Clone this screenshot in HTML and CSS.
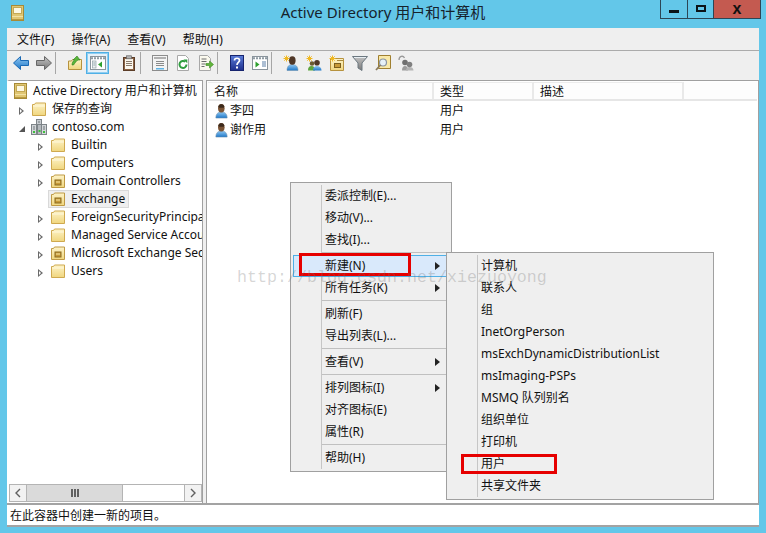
FILE: index.html
```html
<!DOCTYPE html>
<html lang="zh">
<head>
<meta charset="utf-8">
<title>Active Directory 用户和计算机</title>
<link rel="stylesheet" href="styles.css">
</head>
<body>
<svg class="defs" width="0" height="0" aria-hidden="true">
  <defs>
    <linearGradient id="gf" x1="0" y1="0" x2="0" y2="1"><stop offset="0" stop-color="#fdf3c8"/><stop offset="1" stop-color="#f0d67e"/></linearGradient>
    <linearGradient id="gb" x1="0" y1="0" x2="0" y2="1"><stop offset="0" stop-color="#8fc7f2"/><stop offset="1" stop-color="#1f78c8"/></linearGradient>
    <linearGradient id="gg" x1="0" y1="0" x2="0" y2="1"><stop offset="0" stop-color="#c4c4c4"/><stop offset="1" stop-color="#777"/></linearGradient>
    <linearGradient id="gh" x1="0" y1="0" x2="0" y2="1"><stop offset="0" stop-color="#5a7cd8"/><stop offset="1" stop-color="#1e2f8c"/></linearGradient>
    <symbol id="folder" viewBox="0 0 16 16">
      <path d="M1.500 14.500V3.500h2l1-1.500h10v12.500z" fill="url(#gf)" stroke="#cfa94f"/>
      <path d="M2 5h12" stroke="#fff8dc"/>
    </symbol>
    <symbol id="ou" viewBox="0 0 16 16">
      <path d="M1.500 14.500V3.500h2l1-1.500h10v12.500z" fill="url(#gf)" stroke="#bf9a45"/>
      <rect x="5" y="7" width="6" height="5" fill="#c79a38" stroke="#8a6a20"/>
      <path d="M6 9h4" stroke="#f7e7a8"/>
    </symbol>
    <symbol id="root" viewBox="0 0 13 16">
      <rect x=".5" y=".5" width="12" height="15" fill="#e0c672" stroke="#a78a36"/>
      <rect x="2.500" y="2.500" width="8" height="6" fill="#fdf8e2" stroke="#c4a955"/>
      <path d="M1 11.500h11" stroke="#f2e2a4"/>
      <path d="M1 14.500h11" stroke="#b99a40"/>
    </symbol>
    <symbol id="domain" viewBox="0 0 16 16">
      <rect x="5.500" y=".5" width="5" height="7" fill="#c8ccd0" stroke="#7d8488"/>
      <rect x=".5" y="5.500" width="5" height="10" fill="#d2d5d8" stroke="#7d8488"/>
      <rect x="6.500" y="5.500" width="4" height="10" fill="#b5babe" stroke="#7d8488"/>
      <rect x="10.500" y="5.500" width="5" height="10" fill="#d2d5d8" stroke="#7d8488"/>
      <path d="M2 8h2M2 10h2M12 8h2M12 10h2M7 3h2" stroke="#6f767a"/>
      <rect x="2" y="12" width="2" height="2" fill="#3cbf3c"/>
      <rect x="12" y="12" width="2" height="2" fill="#3cbf3c"/>
      <rect x="7.500" y="11" width="2" height="2" fill="#3cbf3c"/>
    </symbol>
    <symbol id="user" viewBox="0 0 16 16">
      <path d="M2 15.500c0-4 1.800-6.500 6-6.500s6 2.500 6 6.500z" fill="url(#gb)" stroke="#6b8eab" stroke-width=".6"/>
      <ellipse cx="7.800" cy="5" rx="3.500" ry="4.600" fill="#7a5436"/>
      <path d="M4.800 3c1-2.800 5-2.800 6 0l-.3 1.500H5.100z" fill="#3c2a1c"/>
    </symbol>
    <symbol id="back" viewBox="0 0 16 16">
      <path d="M.5 8l7-6.500v4h8v5h-8v4z" fill="url(#gb)" stroke="#1a69b4"/>
    </symbol>
    <symbol id="fwd" viewBox="0 0 16 16">
      <path d="M15.500 8l-7-6.500v4h-8v5h8v4z" fill="url(#gg)" stroke="#666"/>
    </symbol>
    <symbol id="upfolder" viewBox="0 0 16 16">
      <path d="M1.500 14.500V6h3l1-1.500h9v10z" fill="url(#gf)" stroke="#b6923e"/>
      <path d="M5 10c0-2 .8-4 2.500-5H6L10 1l3 4h-2C9.500 5.500 8 8 6.500 10z" fill="#5ab53a" stroke="#2f7d1e" stroke-width=".6"/>
    </symbol>
    <symbol id="tree" viewBox="0 0 16 16">
      <rect x=".5" y="1.500" width="15" height="13" fill="#fff" stroke="#8a949c"/>
      <path d="M1 3.200h14" stroke="#8f9aa2" stroke-width="2" stroke-dasharray="2 1"/>
      <rect x="2.500" y="6" width="3.500" height="7" fill="#eef2f0" stroke="#8fa0a8" stroke-width=".7"/>
      <path d="M3.300 8h2M3.300 10h2" stroke="#6a8a9a" stroke-width=".7"/>
      <path d="M12 6.500v6l-4-3z" fill="#2fa02f"/>
    </symbol>
    <symbol id="treer" viewBox="0 0 16 16">
      <rect x=".5" y="1.500" width="15" height="13" fill="#fff" stroke="#8a949c"/>
      <path d="M1 3.200h14" stroke="#8f9aa2" stroke-width="2" stroke-dasharray="2 1"/>
      <path d="M3.500 6.500v6l4-3z" fill="#2fa02f"/>
      <path d="M10 7h4M10 9h4M10 11h4" stroke="#5a7fa8" stroke-width="1.200"/>
    </symbol>
    <symbol id="clip" viewBox="0 0 16 16">
      <rect x="2.500" y="2.500" width="11" height="13" fill="#8a6244" stroke="#5c3d28"/>
      <rect x="4" y="4" width="8" height="10" fill="#fbf7ee"/>
      <rect x="5.500" y=".8" width="5" height="3" fill="#b5b5b5" stroke="#666" stroke-width=".7"/>
      <path d="M5 6.500h6M5 8.500h6M5 10.500h6" stroke="#8a7a6a"/>
    </symbol>
    <symbol id="props" viewBox="0 0 16 16">
      <rect x=".5" y=".5" width="15" height="15" fill="#f4f4f4" stroke="#8c8c8c"/>
      <rect x="2" y="2" width="12" height="2" fill="#b0b0b0"/>
      <path d="M4 6.500h8M4 8.500h8M4 10.500h8" stroke="#8b8b8b"/>
      <rect x="4" y="13" width="8" height="1.500" fill="#5fb4e6"/>
    </symbol>
    <symbol id="refresh" viewBox="0 0 16 16">
      <path d="M2.500.5h8l3 3v12h-11z" fill="#fff" stroke="#a8a8a8"/>
      <path d="M11.500 9.500a3.500 3.500 0 1 1-1.200-2.700" fill="none" stroke="#2f9e3f" stroke-width="2"/>
      <path d="M8.500 4.500h3.800v3.800z" fill="#2f9e3f"/>
    </symbol>
    <symbol id="export" viewBox="0 0 16 16">
      <path d="M1.500.5h8l3 3v12h-11z" fill="#fbf9ee" stroke="#a8a8a8"/>
      <path d="M3.500 4h5M3.500 6.500h5M3.500 9h4M3.500 11.500h3" stroke="#6d6d6d"/>
      <path d="M8 8.500h3.500V6l4 3.500-4 3.500v-2.500H8z" fill="#62b53c" stroke="#3c8a20" stroke-width=".6"/>
    </symbol>
    <symbol id="help" viewBox="0 0 16 16">
      <rect x="1.500" y=".5" width="13" height="15" fill="url(#gh)" stroke="#17246e"/>
      <path d="M5.500 5.500C5.500 2.500 10.500 2.500 10.500 5.500 10.500 7.500 8 7.500 8 10" fill="none" stroke="#fff" stroke-width="1.700"/>
      <rect x="7" y="11.500" width="2" height="2" fill="#fff"/>
    </symbol>
    <symbol id="newuser" viewBox="0 0 16 16">
      <path d="M4 15.500c0-4 1.800-6 5.300-6s5.700 2 5.700 6z" fill="url(#gb)" stroke="#6b8eab" stroke-width=".5"/>
      <ellipse cx="9.300" cy="5.500" rx="3.300" ry="4.200" fill="#4f3727"/>
      <path d="M3.500.5v6M.5 3.500h6M1.300 1.300l4.400 4.400M5.700 1.300L1.300 5.700" stroke="#f0b820"/>
    </symbol>
    <symbol id="newgroup" viewBox="0 0 16 16">
      <path d="M2 15.500c0-3 1-4.500 3.500-4.500s3.500 1.500 3.500 4.500z" fill="#5ea53e"/>
      <path d="M7 15.500c0-3 1.500-4.500 4-4.500s4.500 1.500 4.500 4.500z" fill="url(#gb)"/>
      <circle cx="6" cy="8.500" r="2.300" fill="#6a5a30"/>
      <circle cx="11" cy="7.800" r="2.800" fill="#4f3727"/>
      <path d="M3.500.5v6M.5 3.500h6M1.300 1.300l4.400 4.400M5.700 1.300L1.300 5.700" stroke="#f0b820"/>
    </symbol>
    <symbol id="newou" viewBox="0 0 16 16">
      <path d="M1.500 15.500V3.500h13v12z" fill="url(#gf)" stroke="#b6923e"/>
      <path d="M8 5.500h6" stroke="#a98a3c"/>
      <rect x="5.500" y="8.500" width="6" height="4" fill="#c79a38" stroke="#7b5e1c"/>
      <path d="M3.500.5v6M.5 3.500h6M1.300 1.300l4.400 4.400M5.700 1.300L1.300 5.700" stroke="#f0b820"/>
    </symbol>
    <symbol id="filter" viewBox="0 0 16 16">
      <path d="M.5 1.500h15L10 8v7.500L6 13V8z" fill="url(#gg)" stroke="#6c7880"/>
      <path d="M2 2.500h12" stroke="#e8eef2"/>
    </symbol>
    <symbol id="find" viewBox="0 0 16 16">
      <path d="M3.500.5h12v13h-12z" fill="#f9e9a8" stroke="#a08030"/>
      <circle cx="8" cy="7.500" r="3.500" fill="#e6f0f6" stroke="#8a94a0" stroke-width="1.200"/>
      <path d="M5.500 10L1 15" stroke="#8a7a5c" stroke-width="1.800"/>
    </symbol>
    <symbol id="delegate" viewBox="0 0 16 16">
      <path d="M1 5c0-4 4-5 5.500-2" fill="none" stroke="#999" stroke-width="1.300"/>
      <path d="M4 15.500c0-3 1-4.500 3-4.500s3 1.500 3 4.500z" fill="#9c9c9c"/>
      <path d="M8 15.500c0-2.500 1.500-3.500 3.500-3.500s4 1 4 3.500z" fill="#b4b4b4"/>
      <circle cx="7" cy="7.500" r="2.800" fill="#707070"/>
      <circle cx="11.500" cy="9.500" r="2.800" fill="#808080"/>
    </symbol>
  </defs>
</svg>

<div class="window">
  <header class="titlebar">
    <svg class="app-icon"><use href="#root"/></svg>
    <h1 class="title">Active Directory 用户和计算机</h1>
    <div class="controls">
      <div class="ctl ctl-min"><span class="min-glyph"></span></div>
      <div class="ctl ctl-max"><span class="max-glyph"></span></div>
      <div class="ctl ctl-close">x</div>
    </div>
  </header>

  <main class="client">
    <nav class="menubar">
      <span>文件(F)</span><span>操作(A)</span><span>查看(V)</span><span>帮助(H)</span>
    </nav>
    <div class="toolbar">
      <span class="tb"><svg class="ti"><use href="#back"/></svg></span>
      <span class="tb"><svg class="ti"><use href="#fwd"/></svg></span>
      <span class="sep"></span>
      <span class="tb"><svg class="ti"><use href="#upfolder"/></svg></span>
      <span class="tb active"><svg class="ti"><use href="#tree"/></svg></span>
      <span class="gap"></span>
      <span class="tb"><svg class="ti"><use href="#clip"/></svg></span>
      <span class="sep"></span>
      <span class="tb"><svg class="ti"><use href="#props"/></svg></span>
      <span class="tb"><svg class="ti"><use href="#refresh"/></svg></span>
      <span class="tb"><svg class="ti"><use href="#export"/></svg></span>
      <span class="sep"></span>
      <span class="tb"><svg class="ti"><use href="#help"/></svg></span>
      <span class="tb"><svg class="ti"><use href="#treer"/></svg></span>
      <span class="sep"></span>
      <span class="tb"><svg class="ti"><use href="#newuser"/></svg></span>
      <span class="tb"><svg class="ti"><use href="#newgroup"/></svg></span>
      <span class="tb"><svg class="ti"><use href="#newou"/></svg></span>
      <span class="tb"><svg class="ti"><use href="#filter"/></svg></span>
      <span class="tb"><svg class="ti"><use href="#find"/></svg></span>
      <span class="tb"><svg class="ti"><use href="#delegate"/></svg></span>
    </div>

    <div class="panes">
      <section class="left">
        <ul class="tree">
          <li class="row lv0"><span class="node"><svg class="ic-root"><use href="#root"/></svg><span class="lbl">Active Directory 用户和计算机</span></span></li>
          <li class="row lv1"><span class="tw open"></span><span class="node"><svg class="ic"><use href="#folder"/></svg><span class="lbl">保存的查询</span></span></li>
          <li class="row lv1"><span class="tw down"></span><span class="node"><svg class="ic"><use href="#domain"/></svg><span class="lbl">contoso.com</span></span></li>
          <li class="row lv2"><span class="tw open"></span><span class="node"><svg class="ic"><use href="#folder"/></svg><span class="lbl">Builtin</span></span></li>
          <li class="row lv2"><span class="tw open"></span><span class="node"><svg class="ic"><use href="#folder"/></svg><span class="lbl">Computers</span></span></li>
          <li class="row lv2"><span class="tw open"></span><span class="node"><svg class="ic"><use href="#ou"/></svg><span class="lbl">Domain Controllers</span></span></li>
          <li class="row lv2"><span class="tw"></span><span class="node selected"><svg class="ic"><use href="#ou"/></svg><span class="lbl">Exchange</span></span></li>
          <li class="row lv2"><span class="tw open"></span><span class="node"><svg class="ic"><use href="#folder"/></svg><span class="lbl">ForeignSecurityPrincipals</span></span></li>
          <li class="row lv2"><span class="tw open"></span><span class="node"><svg class="ic"><use href="#folder"/></svg><span class="lbl">Managed Service Accounts</span></span></li>
          <li class="row lv2"><span class="tw open"></span><span class="node"><svg class="ic"><use href="#ou"/></svg><span class="lbl">Microsoft Exchange Security Groups</span></span></li>
          <li class="row lv2"><span class="tw open"></span><span class="node"><svg class="ic"><use href="#folder"/></svg><span class="lbl">Users</span></span></li>
        </ul>
        <div class="hscroll">
          <span class="sbtn"><svg class="chev" viewBox="0 0 8 10"><path d="M6 1L2 5l4 4" fill="none" stroke="#606060" stroke-width="1.400"/></svg></span>
          <span class="thumb"><i></i><i></i><i></i></span>
          <span class="strack"></span>
          <span class="sbtn"><svg class="chev" viewBox="0 0 8 10"><path d="M2 1l4 4-4 4" fill="none" stroke="#606060" stroke-width="1.400"/></svg></span>
        </div>
      </section>
      <section class="right">
        <div class="thead">
          <span class="th c1">名称</span><span class="th c2">类型</span><span class="th c3">描述</span>
        </div>
        <div class="tr"><span class="td c1"><svg class="ic-user"><use href="#user"/></svg>李四</span><span class="td c2">用户</span></div>
        <div class="tr"><span class="td c1"><svg class="ic-user"><use href="#user"/></svg>谢作用</span><span class="td c2">用户</span></div>
      </section>
    </div>

    <footer class="status">在此容器中创建一新的项目。</footer>
  </main>
</div>

<ul class="menu menu-main">
  <li class="mi">委派控制(E)...</li>
  <li class="mi">移动(V)...</li>
  <li class="mi">查找(I)...</li>
  <li class="ms"></li>
  <li class="mi hot has-sub">新建(N)</li>
  <li class="mi has-sub">所有任务(K)</li>
  <li class="ms"></li>
  <li class="mi">刷新(F)</li>
  <li class="mi">导出列表(L)...</li>
  <li class="ms"></li>
  <li class="mi has-sub">查看(V)</li>
  <li class="ms"></li>
  <li class="mi has-sub">排列图标(I)</li>
  <li class="mi">对齐图标(E)</li>
  <li class="mi">属性(R)</li>
  <li class="ms"></li>
  <li class="mi">帮助(H)</li>
</ul>

<ul class="menu menu-sub">
  <li class="mi">计算机</li>
  <li class="mi">联系人</li>
  <li class="mi">组</li>
  <li class="mi">InetOrgPerson</li>
  <li class="mi">msExchDynamicDistributionList</li>
  <li class="mi">msImaging-PSPs</li>
  <li class="mi">MSMQ 队列别名</li>
  <li class="mi">组织单位</li>
  <li class="mi">打印机</li>
  <li class="mi">用户</li>
  <li class="mi">共享文件夹</li>
</ul>

<div class="mark mark-new"></div>
<div class="mark mark-user"></div>
<div class="watermark">http://blog.csdn.net/xiezuoyong</div>
</body>
</html>
```

FILE: styles.css
```css
* { box-sizing: border-box; }
html, body { margin: 0; padding: 0; }
body {
  width: 766px;
  height: 533px;
  overflow: hidden;
  position: relative;
  background: #63c7e9;
  font-family: "Noto Sans", "Noto Sans CJK SC", sans-serif;
  font-size: 12px;
  color: #111;
}
ul { list-style: none; margin: 0; padding: 0; }
.defs { position: absolute; }

.window { display: flex; flex-direction: column; height: 533px; }

.titlebar { height: 28px; position: relative; display: flex; justify-content: center; flex: none; }
.app-icon { position: absolute; left: 11px; top: 5px; width: 13px; height: 16px; }
.title { margin: 0; font-weight: 400; font-size: 15px; line-height: 25px; color: #16222c; }
.controls { position: absolute; right: 5px; top: 0; display: flex; height: 19px; border: 1px solid #2c4656; border-top: 0; }
.ctl { display: flex; align-items: center; justify-content: center; height: 18px; }
.ctl-min { width: 27px; border-right: 1px solid #2c4656; }
.ctl-max { width: 26px; border-right: 1px solid #2c4656; }
.ctl-close { width: 46px; background: #c45a50; font: 700 16px/16px "Liberation Sans", sans-serif; color: #111; }
.min-glyph { width: 10px; height: 3px; background: #0c1418; margin-top: 5px; }
.max-glyph { width: 10px; height: 7px; border: 2px solid #0c1418; margin-top: -2px; }

.client {
  flex: 1;
  margin: 0 7px 6px 7px;
  display: flex;
  flex-direction: column;
  background: #efefef;
  border-bottom: 2px solid #a3a3a3;
  min-height: 0;
}
.menubar { height: 23px; display: flex; align-items: center; gap: 17px; padding-left: 10px; border-bottom: 1px solid #ababab; flex: none; padding-bottom: 1px; }
.toolbar { height: 29px; display: flex; align-items: flex-start; padding: 1px 0 0 2px; flex: none; }
.tb { width: 23px; height: 22px; display: flex; align-items: center; justify-content: center; }
.tb.active { border: 1px solid #4fb0e6; box-shadow: inset 0 0 0 1px #8fcdf0; background: #e6f1f9; }
.ti { width: 16px; height: 16px; }
.sep { width: 1px; height: 22px; background: #a6a6a6; margin-right: 7px; }
.gap { width: 8px; }

.panes { flex: 1; display: flex; min-height: 0; gap: 3px; }
.left {
  width: 196px;
  background: #fff;
  border: 1px solid #a0a0a0;
  border-left: 2px solid #fff;
  border-bottom: 0;
  display: flex;
  flex-direction: column;
}
.tree { flex: 1; overflow: hidden; }
.row { height: 18px; display: flex; align-items: center; white-space: nowrap; }
.lv0 { padding-left: 2px; margin-top: 1px; }
.lv1 { padding-left: 8px; }
.lv2 { padding-left: 27px; }
.tw { width: 12px; height: 10px; flex: none; position: relative; }
.tw.open::before {
  content: "";
  position: absolute; left: 2px; top: 3px;
  border-left: 5px solid #6a6a6a;
  border-top: 4px solid transparent;
  border-bottom: 4px solid transparent;
}
.tw.open::after {
  content: "";
  position: absolute; left: 3px; top: 5px;
  border-left: 2px solid #fff;
  border-top: 2px solid transparent;
  border-bottom: 2px solid transparent;
}
.tw.down::before {
  content: "";
  position: absolute; left: 2px; top: 4px;
  border-right: 6px solid #555;
  border-top: 6px solid transparent;
}
.node { display: flex; align-items: center; gap: 5px; height: 18px; padding: 0 3px 0 1px; border: 1px solid transparent; }
.node.selected { background: #efefef; border-color: #d9d9d9; }
.ic { width: 16px; height: 16px; flex: none; }
.ic-root { width: 13px; height: 16px; flex: none; margin: 0 1px; }
.lbl { line-height: 16px; }

.hscroll { height: 18px; margin-bottom: 1px; display: flex; border: 1px solid #b4b4b4; flex: none; background: #fff; }
.sbtn { width: 17px; display: flex; align-items: center; justify-content: center; background: #f2f2f2; }
.sbtn:first-child { border-right: 1px solid #b4b4b4; }
.sbtn:last-child { border-left: 1px solid #b4b4b4; }
.chev { width: 8px; height: 10px; }
.thumb { width: 96px; background: #dadada; border-right: 1px solid #b4b4b4; display: flex; align-items: center; justify-content: center; gap: 1px; }
.thumb i { width: 2px; height: 8px; background: #606060; }
.strack { flex: 1; }

.right { flex: 1; background: #fff; border: 1px solid #a0a0a0; border-bottom: 0; padding: 1px 1px 0 1px; }
.thead { height: 19px; display: flex; border-bottom: 2px solid #e6e6e6; background: #fdfdfd; }
.th { border-right: 2px solid #e9e9e9; border-top: 1px solid #ececec; padding-left: 6px; line-height: 17px; }
.c1 { width: 226px; }
.c2 { width: 100px; }
.c3 { width: 150px; }
.tr { height: 19px; display: flex; align-items: center; }
.td { display: flex; align-items: center; padding-left: 6px; gap: 1px; line-height: 18px; }
.ic-user { width: 15px; height: 16px; }

.status { height: 22px; background: #fff; border-top: 2px solid #a3a3a3; padding-left: 3px; line-height: 22px; flex: none; }

.menu {
  position: absolute;
  background: #efefef;
  border: 1px solid #a0a0a0;
  padding: 2px;
}
.menu-main { left: 290px; top: 182px; width: 162px; height: 290px; }
.menu-sub { left: 446px; top: 252px; width: 268px; height: 248px; }
.mi { height: 22px; line-height: 21px; white-space: nowrap; position: relative; padding-left: 32px; }
.menu::before {
  content: "";
  position: absolute;
  top: 2px; bottom: 2px;
  left: 30px;
  width: 1px;
  background: #c6c6c6;
}
.ms { height: 4px; padding-top: 1px; margin-left: 28px; }
.ms::before { content: ""; display: block; height: 1px; background: #c0c0c0; margin-left: 1px; }
.hot { background: #d9e9fb; box-shadow: inset 0 0 0 1px #4fb0e6; }
.has-sub::after {
  content: "";
  position: absolute;
  right: 9px; top: 7px;
  border-left: 5px solid #222;
  border-top: 4px solid transparent;
  border-bottom: 4px solid transparent;
}
.mark { position: absolute; border: 3px solid #e60000; }
.mark-new { left: 299px; top: 253px; width: 112px; height: 23px; }
.mark-user { left: 461px; top: 454px; width: 96px; height: 20px; }
.watermark {
  position: absolute;
  left: 237px; top: 268px;
  font-family: "Liberation Mono", monospace;
  font-size: 16.67px;
  line-height: 20px;
  color: rgba(110, 110, 110, .28);
  white-space: nowrap;
  pointer-events: none;
}
```
